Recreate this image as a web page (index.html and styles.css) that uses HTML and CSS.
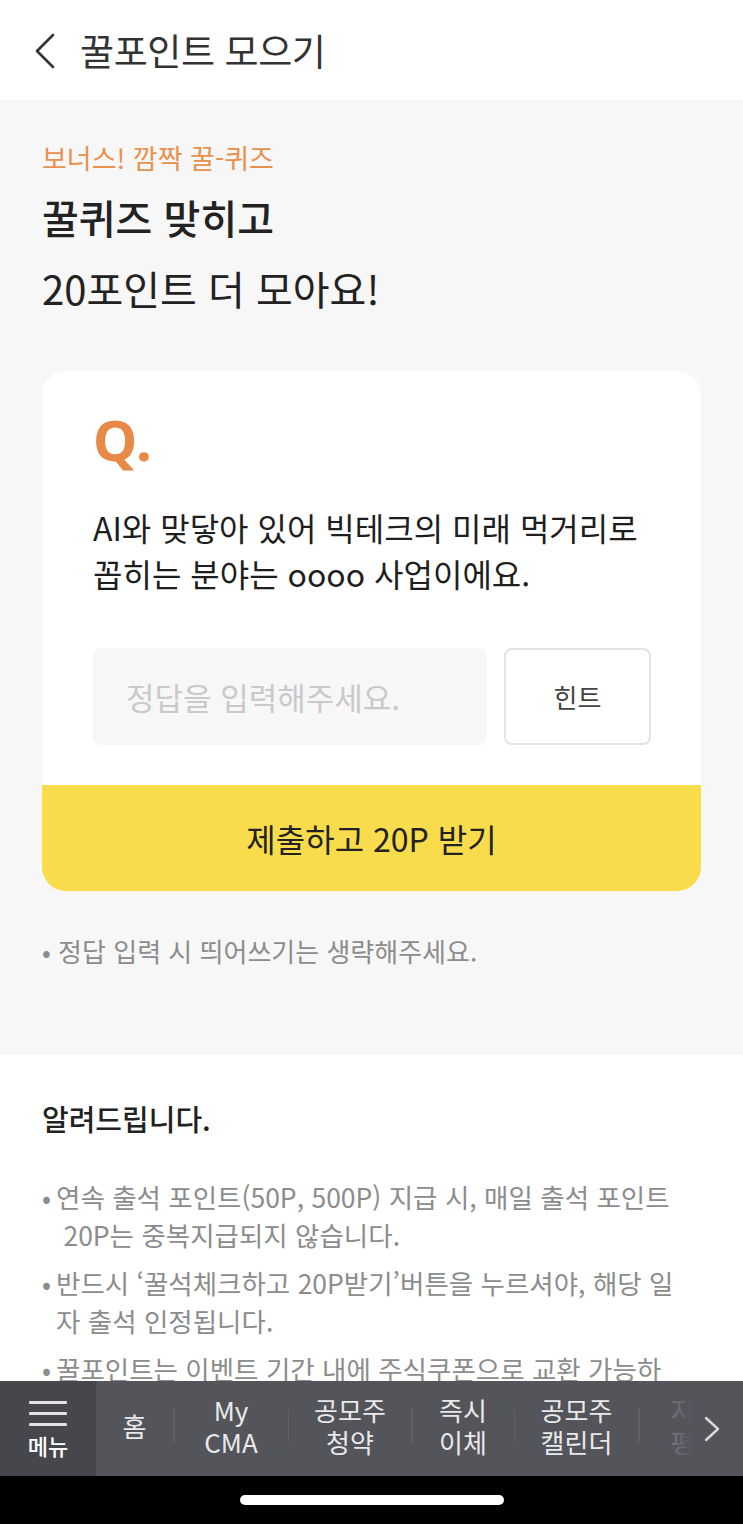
FILE: index.html
```html
<!DOCTYPE html>
<html lang="ko">
<head>
<meta charset="utf-8">
<title>꿀포인트 모으기</title>
<link rel="stylesheet" href="styles.css">
</head>
<body>
<div class="app">
  <header class="topbar">
    <svg class="back" width="22" height="36" viewBox="0 0 22 36"><path d="M19 2 L3 18 L19 34" fill="none" stroke="#333" stroke-width="2.6" stroke-linecap="round" stroke-linejoin="round"/></svg>
    <h1 class="title">꿀포인트 모으기</h1>
  </header>

  <section class="quiz">
    <p class="eyebrow">보너스! 깜짝 꿀-퀴즈</p>
    <h2 class="headline strong">꿀퀴즈 맞히고</h2>
    <p class="headline">20포인트 더 모아요!</p>

    <div class="card">
      <div class="card-body">
        <div class="q-mark">Q.</div>
        <p class="question">AI와 맞닿아 있어 빅테크의 미래 먹거리로<br>꼽히는 분야는 oooo 사업이에요.</p>
        <div class="answer-row">
          <div class="answer-input">정답을 입력해주세요.</div>
          <div class="hint-btn">힌트</div>
        </div>
      </div>
      <div class="submit">제출하고 20P 받기</div>
    </div>

    <p class="note">• 정답 입력 시 띄어쓰기는 생략해주세요.</p>
  </section>

  <section class="notice">
    <h3 class="notice-title">알려드립니다.</h3>
    <ul class="notice-list">
      <li><span class="dot">•</span><span>연속 출석 포인트(50P, 500P) 지급 시, 매일 출석 포인트<br>&nbsp;20P는 중복지급되지 않습니다.</span></li>
      <li><span class="dot">•</span><span>반드시 ‘꿀석체크하고 20P받기’버튼을 누르셔야, 해당 일<br>자 출석 인정됩니다.</span></li>
      <li><span class="dot">•</span><span>꿀포인트는 이벤트 기간 내에 주식쿠폰으로 교환 가능하<br>며, 기간이 지나면 소멸됩니다.</span></li>
    </ul>
  </section>

  <nav class="tabbar">
    <div class="menu">
      <span class="burger"><i></i><i></i><i></i></span>
      <span class="menu-label">메뉴</span>
    </div>
    <div class="tabs">
      <div class="tab w-home">홈</div>
      <span class="sep"></span>
      <div class="tab w-cma">My<br>CMA</div>
      <span class="sep"></span>
      <div class="tab w-ipo">공모주<br>청약</div>
      <span class="sep"></span>
      <div class="tab w-transfer">즉시<br>이체</div>
      <span class="sep"></span>
      <div class="tab w-cal">공모주<br>캘린더</div>
      <span class="sep"></span>
      <div class="tab w-more">지수<br>평가</div>
    </div>
    <div class="more-arrow">
      <svg width="18" height="28" viewBox="0 0 18 28"><path d="M3 3 L15 14 L3 25" fill="none" stroke="#d8d9db" stroke-width="2.4" stroke-linecap="round" stroke-linejoin="round"/></svg>
    </div>
  </nav>
  <div class="home-area"><span class="home-bar"></span></div>
</div>
</body>
</html>
```

FILE: styles.css
```css
* { box-sizing: border-box; margin: 0; padding: 0; }
html, body { width: 743px; height: 1524px; overflow: hidden; }
body {
  font-family: "Noto Sans CJK KR", "Noto Sans", sans-serif;
  color: #222;
  background: #fff;
}
.app { display: flex; flex-direction: column; height: 1524px; }

.topbar {
  height: 100px;
  flex: none;
  display: flex;
  align-items: center;
  padding-left: 34px;
  background: #fff;
}
.back { margin-right: 24px; margin-top: 2px; }
.title { font-size: 37px; font-weight: 400; color: #333; letter-spacing: -0.4px; }

.quiz {
  flex: none;
  height: 955px;
  background: #f7f7f7;
  padding: 40px 42px 0;
}
.eyebrow { font-size: 27px; line-height: 36px; color: #e8914c; }
.headline { font-size: 40px; line-height: 71px; font-weight: 400; color: #222; }
.headline.strong { font-weight: 500; margin-top: 6px; }

.card {
  margin-top: 47px;
  width: 659px;
  background: #fff;
  border-radius: 24px;
  overflow: hidden;
}
.card-body { padding: 38px 50px 40px 51px; }
.q-mark { font-size: 56px; line-height: 60px; font-weight: 700; color: #e88a47; font-family: "Noto Sans", sans-serif; letter-spacing: 1px; }
.question { margin-top: 35px; font-size: 32px; line-height: 46px; color: #1e1e1e; }
.answer-row { margin-top: 52px; display: flex; gap: 17px; height: 97px; }
.answer-input {
  flex: 1;
  background: #f7f7f7;
  border-radius: 8px;
  display: flex;
  align-items: center;
  padding-left: 33px;
  font-size: 31px;
  color: #c9c9c9;
}
.hint-btn {
  width: 147px;
  border: 2px solid #e3e3e3;
  border-radius: 8px;
  display: flex;
  align-items: center;
  justify-content: center;
  font-size: 26px;
  color: #444;
}
.submit {
  height: 106px;
  background: #f8dc4b;
  display: flex;
  align-items: center;
  justify-content: center;
  font-size: 32px;
  color: #222;
}
.note { margin-top: 42px; font-size: 26px; line-height: 36px; color: #8c8c8c; }

.notice {
  flex: 1;
  min-height: 0;
  overflow: hidden;
  background: #fff;
  padding: 43px 42px 0;
}
.notice-title { font-size: 29px; line-height: 40px; font-weight: 500; color: #222; }
.notice-list { list-style: none; margin-top: 40px; }
.notice-list li {
  display: flex;
  font-size: 26.5px;
  line-height: 38px;
  color: #8c8c8c;
  margin-bottom: 10px;
}
.dot { width: 14px; flex: none; }

.tabbar {
  flex: none;
  height: 95px;
  background: #53555b;
  display: flex;
  position: relative;
}
.menu {
  width: 96px;
  flex: none;
  background: #45474c;
  display: flex;
  flex-direction: column;
  align-items: center;
  padding-top: 20px;
}
.burger { display: flex; flex-direction: column; gap: 8.5px; width: 38px; }
.burger i { display: block; height: 2.5px; background: #e2e2e2; border-radius: 1px; }
.menu-label { margin-top: 5px; font-size: 22px; line-height: 28px; font-weight: 500; color: #fff; }
.tabs { flex: 1; display: flex; overflow: hidden; align-items: center; padding-bottom: 6px; }
.tab {
  flex: none;
  text-align: center;
  font-size: 26px;
  line-height: 32px;
  color: #e9e9ea;
}
.sep { flex: none; width: 1.5px; height: 33px; background: #5f6167; }
.tab.w-home { width: 77px; }
.tab.w-cma { width: 113px; }
.tab.w-ipo { width: 122px; }
.tab.w-transfer { width: 101px; }
.tab.w-cal { width: 123px; }
.tab.w-more { width: 110px; }
.more-arrow {
  position: absolute;
  right: 0;
  top: 0;
  bottom: 0;
  width: 76px;
  display: flex;
  align-items: center;
  justify-content: center;
  padding-left: 14px;
  background: linear-gradient(to right, rgba(83,85,91,0.75) 0, rgba(83,85,91,0.9) 18px, #53555b 24px);
}
.home-area {
  flex: none;
  height: 48px;
  background: #000;
  display: flex;
  justify-content: center;
  padding-top: 19px;
}
.home-bar { width: 264px; height: 10px; border-radius: 5px; background: #fff; }
```
